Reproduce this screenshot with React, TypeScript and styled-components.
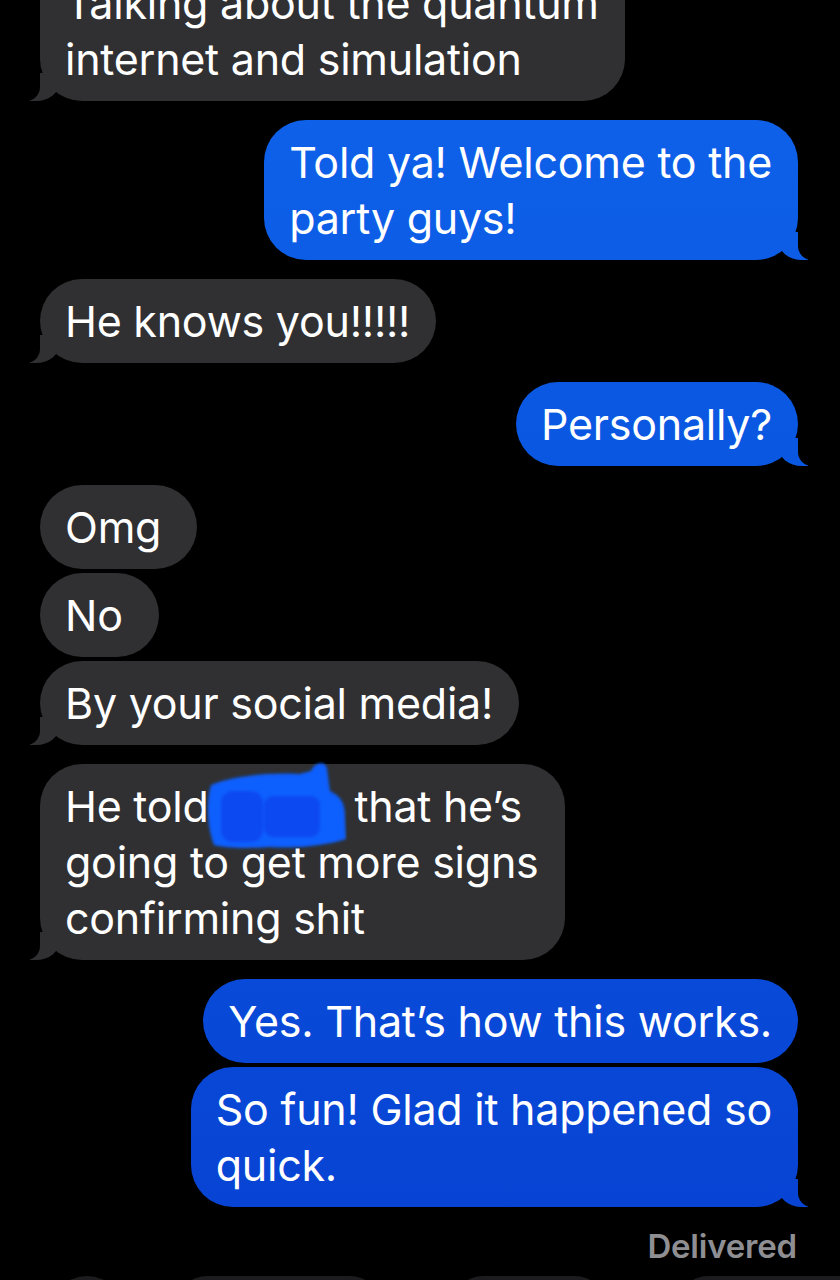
import React from "react";
import styled, { createGlobalStyle, css } from "styled-components";

type Side = "me" | "them";

interface Message {
  side: Side;
  text: React.ReactNode;
  tail?: boolean;
  tight?: boolean;
  wide?: boolean;
}

const GlobalStyle = createGlobalStyle`
  html, body {
    margin: 0;
    padding: 0;
    background: #000;
    height: 1280px;
    overflow: hidden;
  }
  body {
    font-family: Inter, "Noto Sans", "Liberation Sans", sans-serif;
    -webkit-font-smoothing: antialiased;
  }
`;

const BLUE = "linear-gradient(to bottom, #1064ec 0%, #0a57e1 35%, #0842d3 100%)";
const GRAY = "#303032";

const Redaction = () => (
  <RedactBox>
    <svg width="144" height="92" viewBox="204 758 144 92">
      <defs>
        <filter id="soft" x="-10%" y="-10%" width="120%" height="120%">
          <feGaussianBlur stdDeviation="1.4" />
        </filter>
      </defs>
      <g filter="url(#soft)">
        <path
          d="M212 784 C230 776 268 771 300 773 L312 770 C315 762 325 759 328 767 L331 790 C341 795 346 801 346 816 L347 838 C330 844 300 848 270 846 C245 848 226 847 215 844 C208 826 207 800 212 784 Z"
          fill="#0a5efe"
        />
        <rect x="222" y="790" width="42" height="51" rx="12" fill="#074af1" />
        <rect x="265" y="795" width="56" height="41" rx="9" fill="#074af1" />
      </g>
    </svg>
  </RedactBox>
);

const messages: Message[] = [
  { side: "them", text: "Talking about the quantum\ninternet and simulation", tail: true },
  { side: "me", text: "Told ya! Welcome to the\nparty guys!", tail: true },
  { side: "them", text: "He knows you!!!!!", tail: true },
  { side: "me", text: "Personally?", tail: true },
  { side: "them", text: "Omg", wide: true },
  { side: "them", text: "No", tight: true, wide: true },
  { side: "them", text: "By your social media!", tight: true, tail: true },
  {
    side: "them",
    text: (
      <>
        He told<Redaction /> that he’s{"\n"}going to get more signs{"\n"}confirming shit
      </>
    ),
    tail: true,
  },
  { side: "me", text: "Yes. That’s how this works." },
  { side: "me", text: "So fun! Glad it happened so\nquick.", tight: true, tail: true },
];

const App = () => (
  <>
    <GlobalStyle />
    <Thread>
      {messages.map((m, i) => (
        <Row key={i} side={m.side} tight={!!m.tight && i > 0}>
          <Bubble side={m.side} tail={!!m.tail} wide={!!m.wide}>
            {m.text}
          </Bubble>
        </Row>
      ))}
      <Status>Delivered</Status>
      <Dock>
        <DockItem w={76} round />
        <DockItem w={203} />
        <DockItem w={152} />
        <DockItem w={200} />
      </Dock>
    </Thread>
  </>
);

export default App;

const Thread = styled.div`
  display: flex;
  flex-direction: column;
  margin-top: -39px;
  padding: 0 42px 0 40px;
`;

const Row = styled.div<{ side: Side; tight: boolean }>`
  display: flex;
  justify-content: ${({ side }) => (side === "me" ? "flex-end" : "flex-start")};
  margin-top: ${({ tight }) => (tight ? "4px" : "19px")};
  &:first-child {
    margin-top: 0;
  }
`;

const Bubble = styled.div<{ side: Side; tail: boolean; wide: boolean }>`
  position: relative;
  padding: 14px ${({ wide }) => (wide ? "36px" : "26px")} 14px 25px;
  border-radius: 42px;
  color: #fff;
  font-size: 43px;
  line-height: 56px;
  letter-spacing: -0.25px;
  white-space: pre-line;
  background: ${({ side }) => (side === "me" ? BLUE : GRAY)};
  background-attachment: ${({ side }) => (side === "me" ? "fixed" : "scroll")};

  ${({ tail, side }) =>
    tail &&
    css`
      &::before,
      &::after {
        content: "";
        position: absolute;
        bottom: 0;
        height: 28px;
      }
      &::before {
        z-index: 0;
        width: 30px;
        background: ${side === "me" ? BLUE : GRAY};
        background-attachment: ${side === "me" ? "fixed" : "scroll"};
        ${side === "me"
          ? css`
              right: -10px;
              border-bottom-left-radius: 24px 20px;
            `
          : css`
              left: -10px;
              border-bottom-right-radius: 24px 20px;
            `}
      }
      &::after {
        z-index: 1;
        width: 14px;
        background: #000;
        ${side === "me"
          ? css`
              right: -14px;
              border-bottom-left-radius: 14px;
            `
          : css`
              left: -14px;
              border-bottom-right-radius: 14px;
            `}
      }
    `}
`;

const RedactBox = styled.span`
  position: relative;
  display: inline-block;
  width: 134px;
  height: 56px;
  vertical-align: top;

  svg {
    position: absolute;
    left: -6px;
    top: -19px;
  }
`;

const Status = styled.div`
  align-self: flex-end;
  margin-top: 20px;
  margin-right: 1px;
  color: #8e8e93;
  font-size: 33px;
  font-weight: 600;
  line-height: 38px;
  letter-spacing: -0.2px;
`;

const Dock = styled.div`
  display: flex;
  gap: 73px;
  margin: 11px -42px 0 9px;
`;

const DockItem = styled.div<{ w: number; round?: boolean }>`
  flex: none;
  width: ${({ w }) => w}px;
  height: 60px;
  border-radius: ${({ round }) => (round ? "50%" : "30px")};
  background: #1c1c1e;
  ${({ round }) =>
    round &&
    css`
      height: 76px;
      margin-right: -21px;
    `}
`;
